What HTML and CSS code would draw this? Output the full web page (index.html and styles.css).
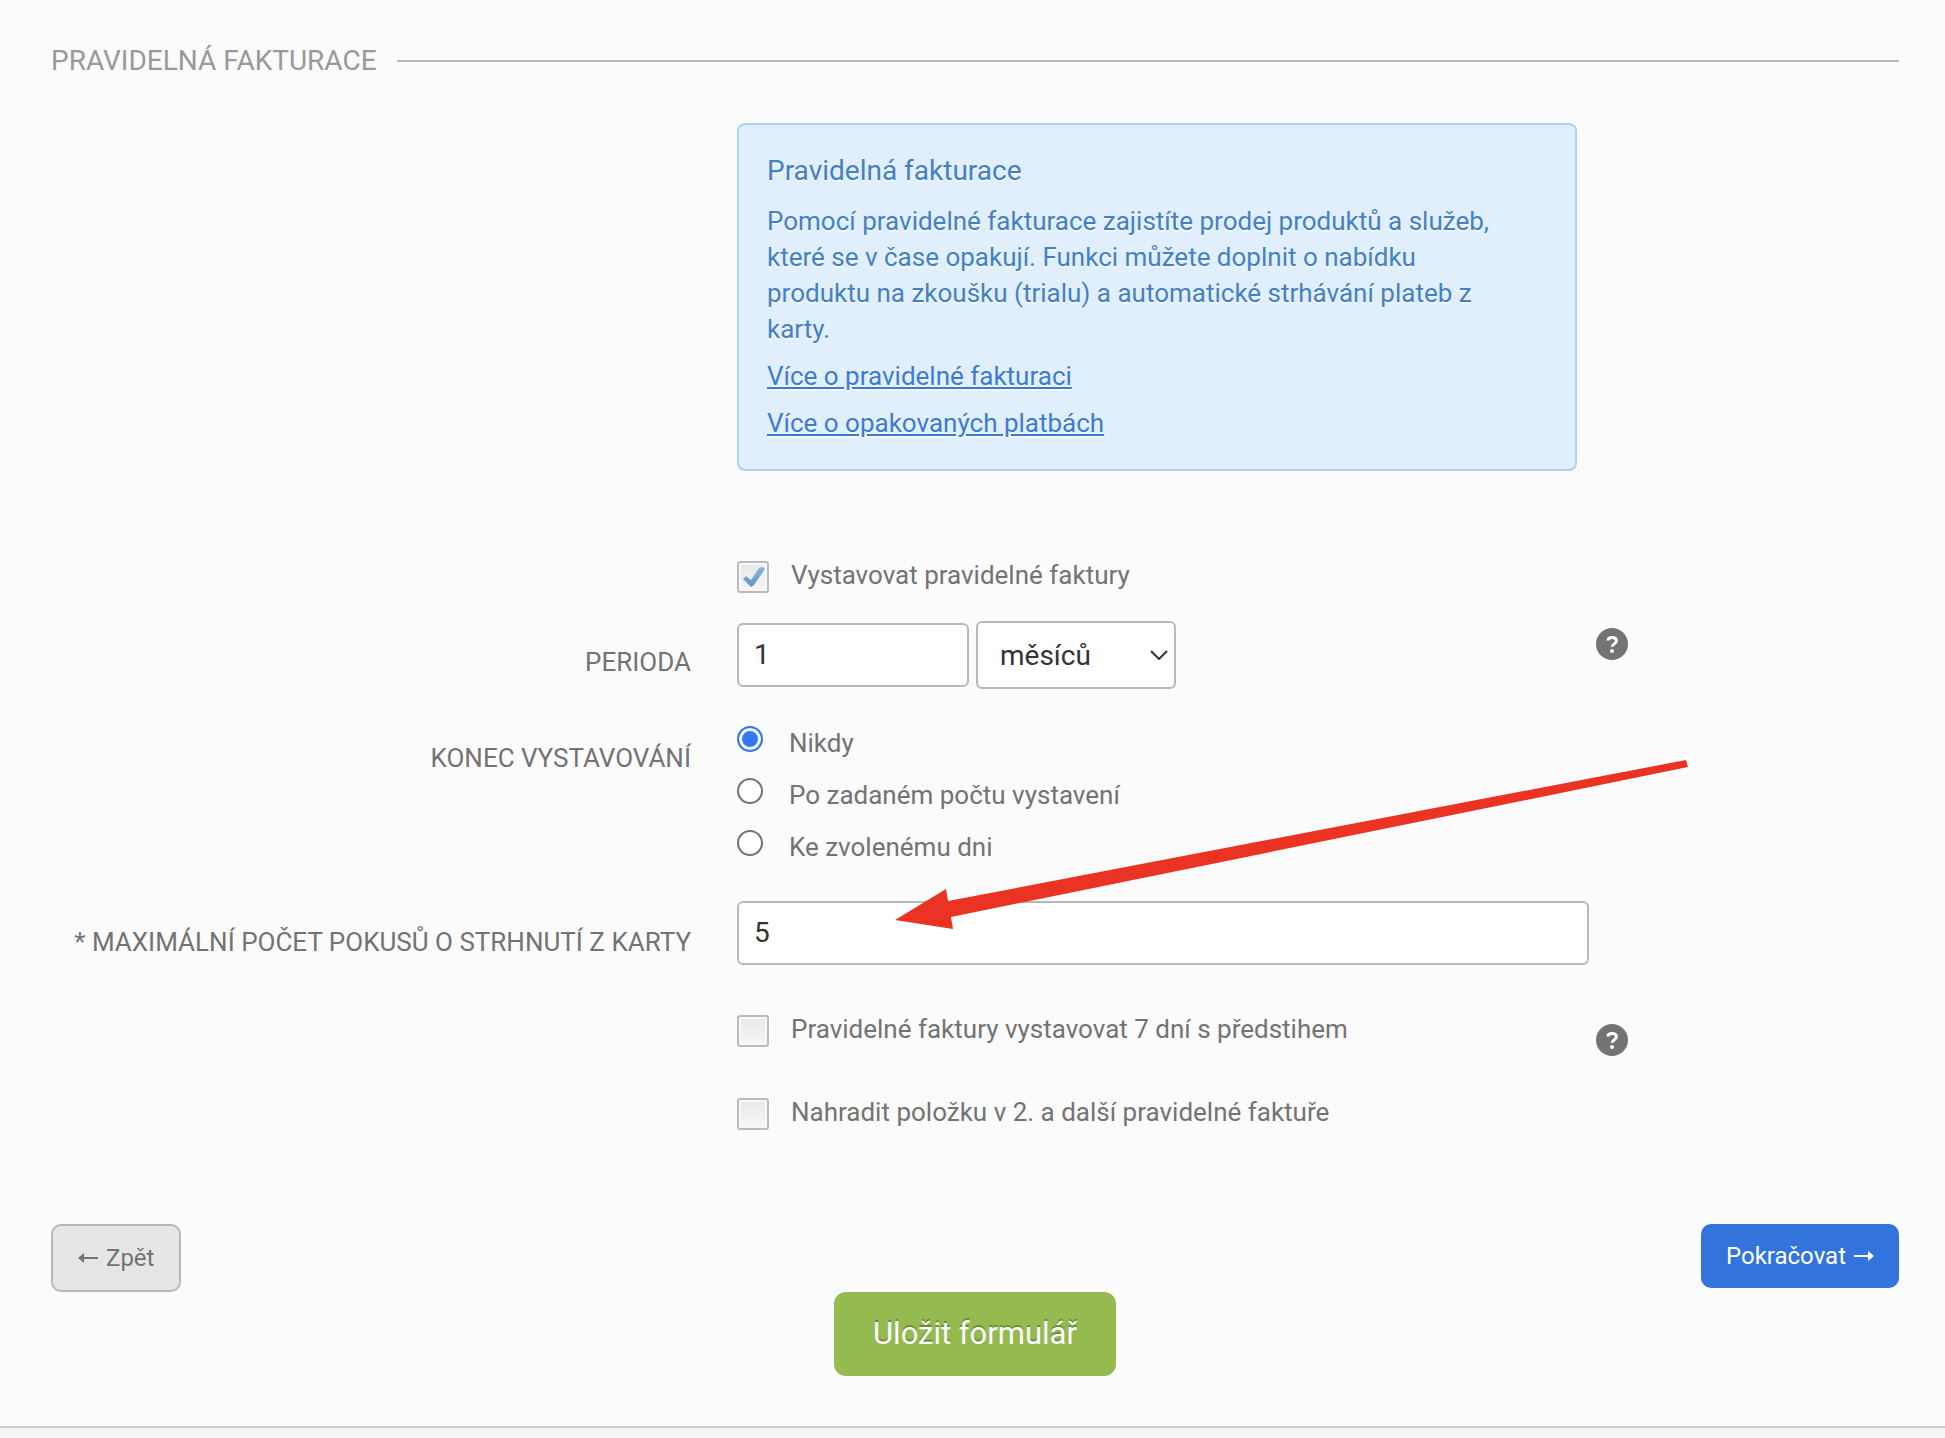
FILE: index.html
```html
<!DOCTYPE html>
<html lang="cs">
<head>
    <meta charset="UTF-8">
    <meta name="viewport" content="width=device-width, initial-scale=1.0">
    <title>Pravidelná fakturace</title>
    <link rel="stylesheet" href="styles.css">
</head>
<body>
<main class="page">
    <h2 class="section-title">Pravidelná fakturace</h2>
    <form class="form">
        <div class="row">
            <div class="field">
                <div class="info">
                    <h3>Pravidelná fakturace</h3>
                    <p>Pomocí pravidelné fakturace zajistíte prodej produktů a služeb, které se v čase opakují. Funkci můžete doplnit o nabídku produktu na zkoušku (trialu) a automatické strhávání plateb z karty.</p>
                    <p><a href="#">Více o pravidelné fakturaci</a></p>
                    <p><a href="#">Více o opakovaných platbách</a></p>
                </div>
            </div>
        </div>

        <div class="row">
            <div class="field check">
                <span class="checkbox">
                    <input type="checkbox" id="recurring" checked>
                    <svg class="tick" viewBox="0 0 32 32">
                        <defs>
                            <linearGradient id="tickFill" x1="0" y1="0" x2="0" y2="1">
                                <stop offset="0" stop-color="#8db8dc"/>
                                <stop offset="1" stop-color="#5f95c6"/>
                            </linearGradient>
                        </defs>
                        <path d="M6 18l3-3 5 4L22 7l3-1 3 2L17 24l-3 2z" fill="url(#tickFill)"/>
                    </svg>
                </span>
                <label for="recurring">Vystavovat pravidelné faktury</label>
            </div>
        </div>

        <div class="row">
            <label class="label" for="period">Perioda</label>
            <div class="field period">
                <input class="text period-count" type="text" id="period" value="1">
                <span class="select">
                    <select aria-label="Jednotka periody">
                        <option>dnů</option>
                        <option selected>měsíců</option>
                        <option>let</option>
                    </select>
                    <svg class="chevron" viewBox="0 0 18 10"><path d="M1 1l8 8 8-8" fill="none" stroke="#333" stroke-width="2"/></svg>
                </span>
            </div>
            <button class="help" type="button" aria-label="Nápověda">
                <svg viewBox="0 0 32 32">
                    <circle cx="16" cy="16" r="16" fill="#737373"/>
                    <path d="M12 12.500C12 10.500 13.500 9.500 16 9.500s4.400 1.100 4.400 3.300c0 3-4.200 3.200-4.200 6" fill="none" stroke="#fff" stroke-width="3"/>
                    <circle cx="16" cy="23" r="2" fill="#fff"/>
                </svg>
            </button>
        </div>

        <div class="row" role="radiogroup" aria-labelledby="end-label">
            <span class="label" id="end-label">Konec vystavování</span>
            <div class="field radios">
                <div class="radio">
                    <input type="radio" name="end" id="end-never" checked>
                    <label for="end-never">Nikdy</label>
                </div>
                <div class="radio">
                    <input type="radio" name="end" id="end-count">
                    <label for="end-count">Po zadaném počtu vystavení</label>
                </div>
                <div class="radio">
                    <input type="radio" name="end" id="end-date">
                    <label for="end-date">Ke zvolenému dni</label>
                </div>
            </div>
        </div>

        <div class="row">
            <label class="label" for="attempts">* Maximální počet pokusů o strhnutí z karty</label>
            <div class="field attempts">
                <input class="text" type="text" id="attempts" value="5">
                <svg class="pointer" viewBox="0 0 793 171">
                    <path d="M0 160L51 129l2 12L791 0l2 7L56 157l2 12z" fill="#ea3323"/>
                </svg>
            </div>
        </div>

        <div class="row row-check">
            <div class="field check">
                <span class="checkbox"><input type="checkbox" id="advance"></span>
                <label for="advance">Pravidelné faktury vystavovat 7 dní s předstihem</label>
            </div>
            <button class="help" type="button" aria-label="Nápověda">
                <svg viewBox="0 0 32 32">
                    <circle cx="16" cy="16" r="16" fill="#737373"/>
                    <path d="M12 12.500C12 10.500 13.500 9.500 16 9.500s4.400 1.100 4.400 3.300c0 3-4.200 3.200-4.200 6" fill="none" stroke="#fff" stroke-width="3"/>
                    <circle cx="16" cy="23" r="2" fill="#fff"/>
                </svg>
            </button>
        </div>

        <div class="row row-check">
            <div class="field check">
                <span class="checkbox"><input type="checkbox" id="replace"></span>
                <label for="replace">Nahradit položku v 2. a další pravidelné faktuře</label>
            </div>
        </div>

        <div class="steps">
            <button class="btn btn-back" type="button">
                <svg viewBox="0 0 20 12"><path d="M0 6l6-5v4h14v2H6v4z" fill="currentColor"/></svg>
                Zpět
            </button>
            <button class="btn btn-next" type="button">
                Pokračovat
                <svg viewBox="0 0 20 12"><path d="M20 6l-6-5v4H0v2h14v4z" fill="currentColor"/></svg>
            </button>
        </div>
        <button class="btn btn-save" type="submit">Uložit formulář</button>
    </form>
</main>
<footer class="footer"></footer>
</body>
</html>
```
FILE: styles.css
```css
* {
    box-sizing: border-box;
}

body {
    margin: 0;
    min-height: 100vh;
    display: flex;
    flex-direction: column;
    font-family: Roboto, "Liberation Sans", sans-serif;
    font-size: 26px;
    line-height: 36px;
    color: #737373;
    background-color: #fbfbfb;
}

h2, h3, p {
    margin: 0;
    font-weight: normal;
}

input, select, button {
    font-family: inherit;
    margin: 0;
}

.page {
    padding: 41px 46px 50px 51px;
}

.section-title {
    display: flex;
    align-items: center;
    gap: 20px;
    margin-bottom: 42px;
    font-size: 28px;
    line-height: 40px;
    text-transform: uppercase;
    color: #999;
}

.section-title::after {
    content: "";
    flex: 1;
    height: 2px;
    background-color: #b8b8b8;
}

/* label | field | help */
.row {
    display: grid;
    grid-template-columns: 686fr 852fr 310fr;
    align-items: start;
    margin-bottom: 28px;
}

.row:first-child {
    margin-bottom: 86px;
}

.label {
    padding: 23px 46px 0 0;
    text-align: right;
    text-transform: uppercase;
    white-space: nowrap;
}

.field {
    grid-column: 2;
}

.info {
    margin-right: 12px;
    padding: 28px 70px 28px 28px;
    border: 2px solid #acd3ec;
    border-radius: 8px;
    background-color: #e1effc;
    color: #4581c0;
    text-shadow: 0 2px 0 rgba(255, 255, 255, 0.5);
}

.info h3 {
    margin-bottom: 14px;
    font-size: 28px;
}

.info p + p {
    margin-top: 11px;
}

.info a {
    color: #3b7bd4;
}

.check {
    display: flex;
    gap: 22px;
}

.checkbox {
    position: relative;
    width: 32px;
    height: 32px;
    margin-top: 4px;
}

.checkbox input {
    display: block;
    appearance: none;
    width: 32px;
    height: 32px;
    border: 2px solid #bbb;
    border-radius: 3px;
    background: linear-gradient(#e8e8e8, #f6f6f6);
    box-shadow: inset 0 0 0 2px #f8f8f8;
}

.tick {
    position: absolute;
    top: 0;
    left: 0;
    width: 32px;
    height: 32px;
    pointer-events: none;
}

.period {
    display: flex;
    align-items: center;
    gap: 7px;
}

.text {
    display: block;
    width: 100%;
    height: 64px;
    padding: 0 15px 2px;
    border: 2px solid #b8b8b8;
    border-radius: 6px;
    background-color: #fff;
    color: #333;
    font-size: 28px;
}

.period-count {
    width: 232px;
}

.select {
    position: relative;
}

.select select {
    display: block;
    appearance: none;
    width: 200px;
    height: 68px;
    padding: 0 22px;
    border: 2px solid #b8b8b8;
    border-radius: 6px;
    background-color: #fff;
    color: #333;
    font-size: 28px;
}

.chevron {
    position: absolute;
    top: 29px;
    right: 8px;
    width: 18px;
    height: 10px;
    pointer-events: none;
}

.help {
    grid-column: 3;
    padding: 7px 0 0 7px;
    border: none;
    background: none;
    justify-self: start;
    cursor: pointer;
}

.help svg {
    display: block;
    width: 32px;
    height: 32px;
}

.radios {
    display: flex;
    flex-direction: column;
    gap: 16px;
    padding: 8px 0;
}

.radio {
    display: flex;
    gap: 26px;
}

.radio input {
    appearance: none;
    width: 26px;
    height: 26px;
    margin-top: 1px;
    border: 2px solid #737373;
    border-radius: 50%;
    background-color: #fff;
}

.radio input:checked {
    border-color: #3478f6;
    background-color: #3478f6;
    box-shadow: inset 0 0 0 3px #fff;
}

.attempts {
    position: relative;
}

.pointer {
    position: absolute;
    left: 158px;
    top: -141px;
    width: 793px;
    height: 171px;
    pointer-events: none;
}

.row-check {
    margin-top: 46px;
}

.row-check + .row-check {
    margin-top: 38px;
}

.row-check .help {
    padding-top: 13px;
}

.steps {
    display: flex;
    justify-content: space-between;
    align-items: flex-start;
    margin-top: 94px;
}

.btn {
    display: flex;
    align-items: center;
    gap: 8px;
    padding: 0 25px;
    border: none;
    border-radius: 10px;
    font-size: 24px;
    cursor: pointer;
}

.btn svg {
    width: 20px;
    height: 12px;
}

.btn-back {
    height: 68px;
    border: 2px solid #b8b8b8;
    background-color: #e6e6e6;
    color: #737373;
}

.btn-next {
    height: 64px;
    background-color: #3273dc;
    color: #fff;
}

.btn-save {
    height: 84px;
    margin: 0 auto;
    padding: 0 39px 2px;
    border-radius: 12px;
    background-color: #94ba50;
    color: #fff;
    font-size: 31px;
    text-shadow: 0 -2px 0 rgba(0, 0, 0, 0.25);
}

.footer {
    flex: 1;
    border-top: 2px solid #ccc;
    background-color: #f4f4f4;
}
```
